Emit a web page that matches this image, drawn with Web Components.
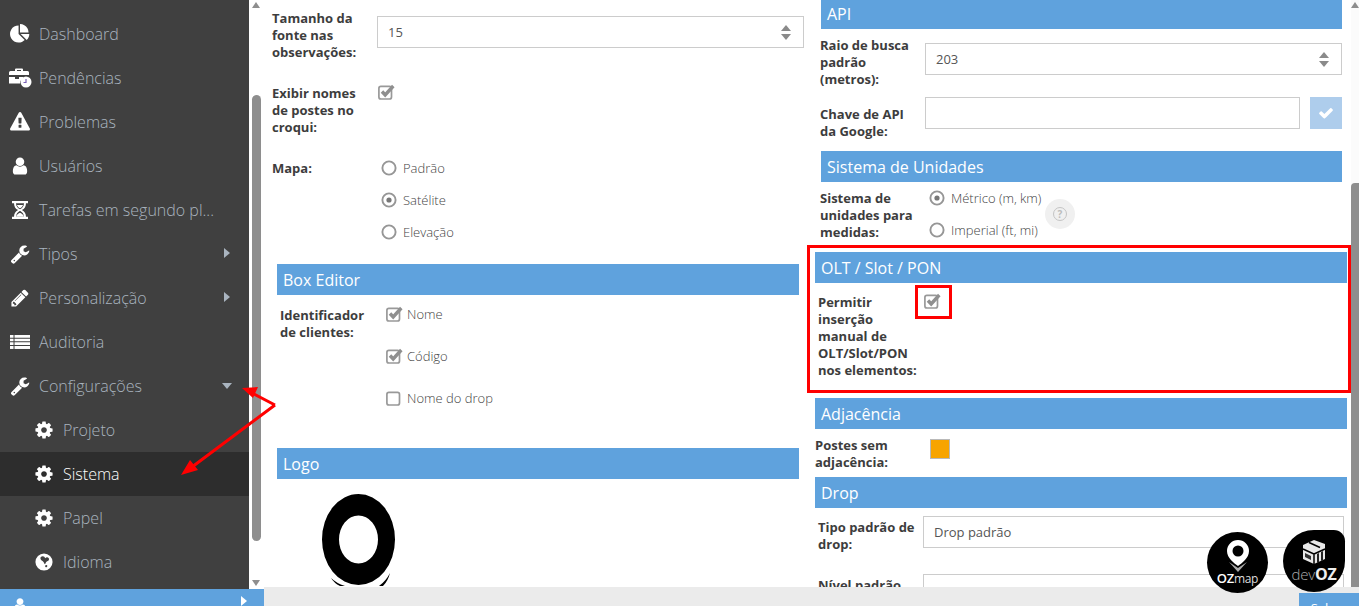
<!DOCTYPE html>
<html>
<head>
<meta charset="utf-8">
<title>Sistema</title>
<style>
  html,body{margin:0;padding:0;height:606px;overflow:hidden;background:#fff;font-family:"Open Sans",sans-serif;}
</style>
</head>
<body>
<app-shell>
  <side-nav slot="nav">
    <nav-item icon="pie">Dashboard</nav-item>
    <nav-item icon="case">Pendências</nav-item>
    <nav-item icon="warn">Problemas</nav-item>
    <nav-item icon="user">Usuários</nav-item>
    <nav-item icon="hour">Tarefas em segundo pl...</nav-item>
    <nav-item icon="wrench" caret="right">Tipos</nav-item>
    <nav-item icon="pencil" caret="right">Personalização</nav-item>
    <nav-item icon="list">Auditoria</nav-item>
    <nav-item icon="wrench" caret="down">Configurações</nav-item>
    <nav-item icon="cog" sub>Projeto</nav-item>
    <nav-item icon="cog" sub active>Sistema</nav-item>
    <nav-item icon="cog" sub>Papel</nav-item>
    <nav-item icon="globe" sub>Idioma</nav-item>
  </side-nav>

  <settings-col slot="left" style="padding:10px 0 0 8px">
    <form-row label="Tamanho da fonte nas observações:" width="105" height="75"><num-input value="15" w="427"></num-input></form-row>
    <form-row label="Exibir nomes de postes no croqui:" width="105" height="75"><check-opt checked nudge="1"></check-opt></form-row>
    <form-row label="Mapa:" width="105" height="104">
      <radio-opt nudge="4">Padrão</radio-opt>
      <radio-opt nudge="4" checked>Satélite</radio-opt>
      <radio-opt nudge="4">Elevação</radio-opt>
    </form-row>
    <sec-head style="margin:0 0 0 5px;width:522px">Box Editor</sec-head>
    <form-row label="Identificador de clientes:" width="106" height="141" style="margin:12px 0 0 8px">
      <check-opt checked gap="42">Nome</check-opt>
      <check-opt checked gap="42">Código</check-opt>
      <check-opt>Nome do drop</check-opt>
    </form-row>
    <sec-head style="margin:0 0 0 5px;width:522px">Logo</sec-head>
    <logo-mark></logo-mark>
  </settings-col>

  <settings-col slot="right">
    <sec-head style="margin:-1px 0 0 14px;width:521px;height:30px">API</sec-head>
    <form-row label="Raio de busca padrão (metros):" width="105" height="60" style="margin:8px 0 0 13px"><num-input value="203" w="417"></num-input></form-row>
    <form-row label="Chave de API da Google:" width="105" height="46" top="9" style="margin:0 0 0 13px">
      <key-input></key-input>
    </form-row>
    <sec-head style="margin:8px 0 0 14px;width:521px">Sistema de Unidades</sec-head>
    <form-row label="Sistema de unidades para medidas:" width="109" height="62" style="margin:8px 0 0 13px">
      <radio-opt h="32" checked>Métrico (m, km)</radio-opt>
      <radio-opt h="30">Imperial (ft, mi)</radio-opt>
      <help-dot></help-dot>
    </form-row>
    <sec-head style="margin:0 0 0 8px;width:532px">OLT / Slot / PON</sec-head>
    <form-row label="Permitir inserção manual de OLT/Slot/PON nos elementos:" width="106" height="104" style="margin:11px 0 0 11px"><check-opt checked></check-opt></form-row>
    <sec-head style="margin:0 0 0 8px;width:532px">Adjacência</sec-head>
    <form-row label="Postes sem adjacência:" width="115" height="40" style="margin:8px 0 0 8px"><color-swatch></color-swatch></form-row>
    <sec-head style="margin:0 0 0 8px;width:532px">Drop</sec-head>
    <form-row label="Tipo padrão de drop:" width="105" height="58" style="margin:11px 0 0 11px"><text-box w="421">Drop padrão</text-box></form-row>
    <form-row label="Nível padrão" width="105" height="30" style="margin:0 0 0 11px"><text-box w="421"></text-box></form-row>
  </settings-col>
</app-shell>
<page-marks></page-marks>

<template id="app-shell">
  <style>
    :host{display:grid;grid-template-columns:264px 1fr;width:1359px;height:606px;overflow:hidden;position:relative}
    .side{display:flex;flex-direction:column;height:606px}
    .side-top{display:flex;height:589px}
    .nav{width:249px;background:#404040;overflow:hidden}
    .foot{height:17px;background:#5fa2dd;color:#fff;display:flex;justify-content:space-between;padding:8px 17px 0 12px;box-sizing:border-box;overflow:hidden}
    .foot svg{display:block;flex:none}
    .main{display:flex;flex-direction:column;height:606px;overflow:hidden}
    .body{display:flex;height:587px;overflow:hidden}
    .cols{display:grid;grid-template-columns:543px 544px;width:1087px;overflow:hidden}
    .bar{height:19px;background:#ebebeb;display:flex;justify-content:flex-end;padding-top:6px;box-sizing:border-box}
    .save{width:60px;height:20px;background:#5fa2dd;color:#fff;font-size:13px;text-align:center;line-height:20px;padding-top:5px;box-sizing:border-box}
  </style>
  <div class="side">
    <div class="side-top">
      <div class="nav"><slot name="nav"></slot></div>
      <v-scroll top="95" h="446" track="589" w="15"></v-scroll>
    </div>
    <div class="foot">
      <svg width="16" height="16" viewBox="0 0 1792 1792" fill="#fff"><path d="M1536 1399q0 109-62.5 187t-150.5 78h-854q-88 0-150.5-78t-62.5-187q0-85 8.5-160.5t31.5-152 58.5-131 94-89 134.5-34.5q131 128 313 128t313-128q76 0 134.5 34.5t94 89 58.5 131 31.5 152 8.5 160.5zm-256-887q0 159-112.5 271.5t-271.5 112.5-271.5-112.5-112.5-271.5 112.5-271.5 271.5-112.5 271.5 112.5 112.5 271.5z"/></svg>
      <svg width="6" height="10" viewBox="0 0 6 10" fill="#fff" style="margin-top:-1px"><path d="M0 0l6 5-6 5z"/></svg>
    </div>
  </div>
  <div class="main">
    <div class="body">
      <div class="cols"><div><slot name="left"></slot></div><div><slot name="right"></slot></div></div>
      <v-scroll top="183" h="404" track="587" w="8"></v-scroll>
    </div>
    <div class="bar"><div class="save">Salvar</div></div>
  </div>
</template>

<script>
const ICONS = {
  pie: '<path d="M768 890l546 546q-106 108-247.5 168t-298.5 60q-209 0-385.5-103t-279.5-279.5-103-385.5 103-385.5 279.5-279.5 385.5-103v762zm187 6h773q0 157-60 298.5t-168 247.5zm709-128h-768v-768q209 0 385.5 103t279.5 279.5 103 385.5z"/>',
  warn: '<path d="M1024 1375v-190q0-14-9.5-23.5t-22.5-9.5h-192q-13 0-22.5 9.5t-9.5 23.5v190q0 14 9.5 23.5t22.5 9.5h192q13 0 22.5-9.5t9.5-23.5zm-2-374l18-459q0-12-10-19-13-11-24-11h-220q-11 0-24 11-10 7-10 21l17 457q0 10 10 16.5t24 6.5h185q14 0 23.5-6.5t10.5-16.5zm-14-934l768 1408q35 63-2 126-17 29-46.5 46t-63.5 17h-1536q-34 0-63.5-17t-46.5-46q-37-63-2-126l768-1408q17-31 47-49t65-18 65 18 47 49z"/>',
  user: '<path d="M1536 1399q0 109-62.5 187t-150.5 78h-854q-88 0-150.5-78t-62.5-187q0-85 8.5-160.5t31.5-152 58.5-131 94-89 134.5-34.5q131 128 313 128t313-128q76 0 134.5 34.5t94 89 58.5 131 31.5 152 8.5 160.5zm-256-887q0 159-112.5 271.5t-271.5 112.5-271.5-112.5-112.5-271.5 112.5-271.5 271.5-112.5 271.5 112.5 112.5 271.5z"/>',
  wrench: '<path d="M448 1472q0-26-19-45t-45-19-45 19-19 45 19 45 45 19 45-19 19-45zm644-420l-682 682q-37 37-90 37-52 0-91-37l-106-108q-38-36-38-90 0-53 38-91l681-681q39 98 114.5 173.5t173.5 114.5zm634-435q0 39-23 106-47 134-164.5 217.5t-258.5 83.5q-185 0-316.5-131.5t-131.5-316.5 131.5-316.5 316.5-131.5q58 0 121.5 16.5t107.5 46.5q16 11 16 28t-16 28l-293 169v224l193 107q5-3 79-48.5t135.5-81 70.5-35.5q15 0 23.5 10t8.5 25z"/>',
  pencil: '<path d="M491 1536l91-91-235-235-91 91v107h128v128h107zm523-928q0-22-22-22-10 0-17 7l-542 542q-7 7-7 17 0 22 22 22 10 0 17-7l542-542q7-7 7-17zm-54-192l416 416-832 832h-416v-416zm683 96q0 53-37 90l-166 166-416-416 166-165q36-38 90-38 53 0 91 38l235 234q37 39 37 91z"/>',
  cog: '<path d="M1152 896q0-106-75-181t-181-75-181 75-75 181 75 181 181 75 181-75 75-181zm512-109v222q0 12-8 23t-20 13l-185 28q-19 54-39 91 35 50 107 138 10 12 10 25t-9 23q-27 37-99 108t-94 71q-12 0-26-9l-138-108q-44 23-91 38-16 136-29 186-7 28-36 28h-222q-14 0-24.5-8.5t-11.5-21.5l-28-184q-49-16-90-37l-141 107q-10 9-25 9-14 0-25-11-126-114-165-168-7-10-7-23 0-12 8-23 15-21 51-66.5t54-70.5q-27-50-41-99l-183-27q-13-2-21-12.5t-8-23.5v-222q0-12 8-23t19-13l186-28q14-46 39-92-40-57-107-138-10-12-10-24 0-10 9-23 26-36 98.5-107.5t94.5-71.5q13 0 26 10l138 107q44-23 91-38 16-136 29-186 7-28 36-28h222q14 0 24.5 8.5t11.5 21.5l28 184q49 16 90 37l142-107q9-9 24-9 13 0 25 10 129 119 165 170 7 8 7 22 0 12-8 23-15 21-51 66.5t-54 70.5q26 50 41 98l183 28q13 2 21 12.5t8 23.5z"/>',
  list: '<rect x="0" y="270" width="1792" height="1250"/><path d="M0 570h1792M0 880h1792M0 1200h1792M360 270v1250" stroke="#404040" stroke-width="90" fill="none"/>',
  hour: '<path d="M180 90h1432v190H180zM180 1510h1432v190H180zM360 280h180c0 240 130 420 360 540 -10 50 -10 100 0 150 -230 120-360 300-360 540H360c0-300 130-500 360-615 -230-115-360-315-360-615zM1432 280h-180c0 240-130 420-360 540 10 50 10 100 0 150 230 120 360 300 360 540h180c0-300-130-500-360-615 230-115 360-315 360-615z"/><path d="M540 1510c30-170 170-290 356-370 186 80 326 200 356 370zM620 440h552c-50 130-140 230-276 310-136-80-226-180-276-310z"/>',
  globe: '<path fill-rule="evenodd" d="M896 128a768 768 0 1 1 0 1536 768 768 0 0 1 0-1536zM640 420c-70 60-80 170-30 250 60 90 170 130 240 230 50 70 60 160 130 190 60-60 70-160 140-220 70-60 190-80 220-180 30-110-60-210-170-210-70 0-110 40-170 70-30-90-130-190-230-170-50 10-90 10-130 40zM1150 1180c-70-30-150 20-150 90 0 70 90 110 150 70 60-40 60-130 0-160z"/>',
};
const CASE_ICON = '<svg width="24" height="20" viewBox="0 0 24 20"><path fill="#fff" d="M7 3V1.500Q7 .5 8 .5h6Q15 .5 15 1.500V3h4.500Q21 3 21 4.500V7H1V4.500Q1 3 2.500 3zM9 2v1h4V2zM1 9h6v2h4V9h4v1.500a6 6 0 0 0-3 5H1z"/><circle cx="18" cy="14" r="5.500" fill="#fff"/><path d="M18 11v3.500h-2.500" stroke="#7a5fb5" stroke-width="1.200" fill="none"/></svg>';

class AppShell extends HTMLElement {
  constructor() {
    super();
    var shadow = this.attachShadow({mode: 'open'});
    shadow.appendChild(document.getElementById('app-shell').content.cloneNode(true));
  }
}

class VScroll extends HTMLElement {
  constructor() {
    super();
    var shadow = this.attachShadow({mode: 'open'});
    var w = this.getAttribute('w'), top = this.getAttribute('top'), h = this.getAttribute('h');
    var track = this.getAttribute('track');
    var wide = w > 10;
    shadow.innerHTML = `<style>
      :host{display:block;width:${w}px;height:${track}px;background:${wide ? '#fff' : '#fbfbfb'};position:relative;flex:none}
      .thumb{position:absolute;left:${wide ? 3 : 0}px;width:${wide ? 9 : 8}px;top:${top}px;height:${h}px;background:#8e8e8e;border-radius:${wide ? '5px' : '4px 0 0 0'}}
      .up,.down{position:absolute;width:0;height:0;border-left:4px solid transparent;border-right:4px solid transparent;left:${wide ? 3 : 0}px}
      .up{top:2px;border-bottom:6px solid #8e8e8e}
      .down{bottom:3px;border-top:6px solid #8e8e8e}
    </style><div class="thumb"></div><div class="up"></div><div class="down"></div>`;
  }
}

class SideNav extends HTMLElement {
  constructor() {
    super();
    var shadow = this.attachShadow({mode: 'open'});
    shadow.innerHTML = `<style>:host{display:block;padding-top:12px}</style><slot></slot>`;
  }
}

class NavItem extends HTMLElement {
  constructor() {
    super();
    var shadow = this.attachShadow({mode: 'open'});
    var icon = this.getAttribute('icon');
    var sub = this.hasAttribute('sub');
    var active = this.hasAttribute('active');
    var caret = this.getAttribute('caret');
    var svg = icon == 'case' ? CASE_ICON :
      `<svg width="20" height="20" viewBox="0 0 1792 1792" fill="#fff">${ICONS[icon]}</svg>`;
    var mark = '';
    if (caret == 'right') mark = '<span class="caret r"></span>';
    if (caret == 'down') mark = '<span class="caret d"></span>';
    shadow.innerHTML = `<style>
      :host{display:flex;align-items:center;height:44px;box-sizing:border-box;padding-left:${sub ? 33 : 8}px;
        font:300 16px/22px "Open Sans",sans-serif;color:${active ? '#fff' : '#a9b4bf'};background:${active ? '#2d2d2d' : 'transparent'};position:relative}
      .ic{width:${sub ? 22 : 24}px;display:flex;justify-content:center;margin-right:${sub ? 8 : 7}px;flex:none}
      svg{display:block}
      .caret{position:absolute;width:0;height:0}
      .r{left:224px;top:16px;border-top:5px solid transparent;border-bottom:5px solid transparent;border-left:6px solid #a9b4bf}
      .d{left:222px;top:19px;border-left:5px solid transparent;border-right:5px solid transparent;border-top:6px solid #a9b4bf}
    </style><span class="ic">${svg}</span><span><slot></slot></span>${mark}`;
  }
}

class SettingsCol extends HTMLElement {
  constructor() {
    super();
    var shadow = this.attachShadow({mode: 'open'});
    shadow.innerHTML = `<style>:host{display:block}</style><slot></slot>`;
  }
}

class SecHead extends HTMLElement {
  constructor() {
    super();
    var shadow = this.attachShadow({mode: 'open'});
    shadow.innerHTML = `<style>
      :host{display:flex;align-items:center;height:31px;box-sizing:border-box;padding-left:6px;background:#5fa2dd;color:#fff;
        font:400 16px/20px "Open Sans",sans-serif}
    </style><slot></slot>`;
  }
}

class FormRow extends HTMLElement {
  constructor() {
    super();
    var shadow = this.attachShadow({mode: 'open'});
    var w = this.getAttribute('width'), h = this.getAttribute('height');
    var top = this.getAttribute('top') || 0;
    // label text wraps at 100px whatever the column is
    shadow.innerHTML = `<style>
      :host{display:flex;height:${h}px;position:relative}
      .l{width:${w}px;box-sizing:border-box;padding-right:${w - 100}px;flex:none;font:700 13px/17px "Open Sans",sans-serif;color:#3d3d3d;margin-top:${top}px}
      .c{flex:1;min-width:0;position:relative}
    </style><div class="l">${this.getAttribute('label')}</div><div class="c"><slot></slot></div>`;
  }
}

class NumInput extends HTMLElement {
  constructor() {
    super();
    var shadow = this.attachShadow({mode: 'open'});
    shadow.innerHTML = `<style>
      :host{display:flex;align-items:center;justify-content:space-between;width:${this.getAttribute('w')}px;height:32px;box-sizing:border-box;
        border:1px solid #ccc;padding:0 12px 0 10px;margin-top:6px;font:400 13px "Open Sans",sans-serif;color:#555;background:#fff}
      i{display:block;width:0;height:0;border-left:5px solid transparent;border-right:5px solid transparent}
      .u{border-bottom:6px solid #8a8a8a;margin-bottom:3px}
      .d{border-top:6px solid #8a8a8a}
    </style><span>${this.getAttribute('value')}</span><span><i class="u"></i><i class="d"></i></span>`;
  }
}

class KeyInput extends HTMLElement {
  constructor() {
    super();
    var shadow = this.attachShadow({mode: 'open'});
    shadow.innerHTML = `<style>
      :host{display:flex;gap:10px}
      .i{width:375px;height:32px;box-sizing:border-box;border:1px solid #ccc}
      .b{width:32px;height:32px;background:#aecdec;display:flex;align-items:center;justify-content:center}
    </style><div class="i"></div><div class="b"><svg width="16" height="16" viewBox="0 0 1792 1792" fill="#fff"><path d="M1671 566q0 40-28 68l-724 724-136 136q-28 28-68 28t-68-28l-136-136-362-362q-28-28-28-68t28-68l136-136q28-28 68-28t68 28l294 295 656-657q28-28 68-28t68 28l136 136q28 28 28 68z"/></svg></div>`;
  }
}

class TextBox extends HTMLElement {
  constructor() {
    super();
    var shadow = this.attachShadow({mode: 'open'});
    shadow.innerHTML = `<style>
      :host{display:flex;align-items:center;width:${this.getAttribute('w')}px;height:32px;box-sizing:border-box;border:1px solid #ccc;
        padding-left:10px;margin-top:-3px;font:400 13px "Open Sans",sans-serif;color:#555;background:#fff}
    </style><slot></slot>`;
  }
}

class CheckOpt extends HTMLElement {
  constructor() {
    super();
    var shadow = this.attachShadow({mode: 'open'});
    var on = this.hasAttribute('checked');
    var gap = this.getAttribute('gap') || 0;
    var nudge = this.getAttribute('nudge') || 0;
    shadow.innerHTML = `<style>
      :host{display:flex;align-items:flex-start;height:${gap || 20}px;margin-left:${nudge}px;font:300 13px/17px "Open Sans",sans-serif;color:#444}
      svg{flex:none;display:block;margin-right:5px;overflow:visible}
      span{margin-top:-1px}
    </style><svg width="16" height="15" viewBox="0 0 16 15">
      <rect x=".9" y="1.400" width="12.600" height="12.600" rx="2" fill="#fff" stroke="#999" stroke-width="1.700"/>
      ${on ? '<path d="M4 6.500l3.200 3.500L15.300 1" fill="none" stroke="#8f8f8f" stroke-width="3.400"/>' : ''}
    </svg><span><slot></slot></span>`;
  }
}

class RadioOpt extends HTMLElement {
  constructor() {
    super();
    var shadow = this.attachShadow({mode: 'open'});
    var on = this.hasAttribute('checked');
    var nudge = this.getAttribute('nudge') || 0;
    var h = this.getAttribute('h') || 32;
    shadow.innerHTML = `<style>
      :host{display:flex;align-items:flex-start;height:${h}px;margin-left:${nudge}px;font:300 13px/17px "Open Sans",sans-serif;color:#444}
      svg{flex:none;display:block;margin-right:6px}
    </style><svg width="16" height="16" viewBox="0 0 16 16">
      <circle cx="8" cy="8" r="6.600" fill="#fff" stroke="#969696" stroke-width="1.900"/>
      ${on ? '<circle cx="8" cy="8" r="2.600" fill="#777"/>' : ''}
    </svg><span><slot></slot></span>`;
  }
}

class HelpDot extends HTMLElement {
  constructor() {
    super();
    var shadow = this.attachShadow({mode: 'open'});
    shadow.innerHTML = `<style>
      :host{position:absolute;left:116px;top:9px;width:30px;height:30px;border-radius:50%;background:#f0f0f0;display:flex;align-items:center;justify-content:center}
      b{width:14px;height:14px;box-sizing:border-box;border:1px solid #c4c4c4;border-radius:50%;color:#bdbdbd;font:700 10px/12px "Open Sans",sans-serif;text-align:center}
    </style><b>?</b>`;
  }
}

class ColorSwatch extends HTMLElement {
  constructor() {
    super();
    var shadow = this.attachShadow({mode: 'open'});
    shadow.innerHTML = `<style>
      :host{display:block;width:20px;height:20px;box-sizing:border-box;background:#f7a400;border:1px solid #b9b9b9;margin-top:2px}
    </style>`;
  }
}

class LogoMark extends HTMLElement {
  constructor() {
    super();
    var shadow = this.attachShadow({mode: 'open'});
    shadow.innerHTML = `<style>
      :host{display:block;height:108px;overflow:hidden;padding:15px 0 0 49px}
      svg{display:block}
    </style><svg width="90" height="110" viewBox="0 0 90 110">
      <path d="M10 84q3 5 9 8h5q-9-3-14-8zM69 79q-4 8-11 13h4q5-5 7-13z" fill="#000"/>
      <path fill-rule="evenodd" fill="#000" d="M37.500 0a36.500 45.500 0 1 1 0 91 36.500 45.500 0 0 1 0-91zM37.500 21.500a19.500 24 0 1 0 0 48 19.500 24 0 0 0 0-48z"/>
    </svg>`;
  }
}

class PageMarks extends HTMLElement {
  constructor() {
    super();
    var shadow = this.attachShadow({mode: 'open'});
    shadow.innerHTML = `<style>
      :host{position:absolute;left:0;top:0;width:1359px;height:606px;pointer-events:none}
      .box{position:absolute;box-sizing:border-box;border:3px solid #f00}
      .a{left:807px;top:245px;width:544px;height:148px}
      .b{left:915px;top:285px;width:37px;height:34px}
      svg.arrow{position:absolute;left:0;top:0}
      .badge{position:absolute;width:61px;height:61px;background:#000;border-radius:50%;color:#fff;font-family:"Open Sans",sans-serif;text-align:center;box-sizing:border-box}
      .oz{left:1207px;top:532px}
      .dev{left:1283px;top:530px;width:62px;height:62px;border-radius:50% 18% 50% 50%}
      .badge span{position:absolute;left:0;right:0;line-height:14px;white-space:nowrap}
      .oz span{top:39px;font-size:13px;font-weight:600;letter-spacing:-.3px}
      .oz span em{font-style:normal;font-weight:400;font-size:12px;color:#ddd}
      .dev span{top:37px;font-size:15px;font-weight:300;color:#aaa;letter-spacing:-.2px}
      .dev span b{color:#eee;font-weight:700;font-size:16px}
      .badge svg{position:absolute}
    </style>
    <div class="box a"></div><div class="box b"></div>
    <svg class="arrow" width="1359" height="606" viewBox="0 0 1359 606">
      <path d="M275 405L254 394M275 405L192 467" stroke="#f00" stroke-width="3" fill="none"/>
      <path d="M242 388l16-1-5 11zM181 475l9-15 8 10z" fill="#f00"/>
    </svg>
    <div class="badge oz">
      <svg style="left:18px;top:7px" width="26" height="34" viewBox="0 0 26 34"><path d="M13 1a11 11 0 0 1 11 11C24 19 17 24 13 27 9 24 2 19 2 12A11 11 0 0 1 13 1z" fill="#fff"/><circle cx="13" cy="12" r="5.500" fill="#000"/><path d="M4 23l9 10 9-10-9 6z" fill="#aaa"/></svg>
      <span>OZ<em>map</em></span>
    </div>
    <div class="badge dev">
      <svg style="left:18px;top:9px" width="26" height="26" viewBox="0 0 26 26"><path d="M2 6l11-5 11 4v15l-11 5-11-5z" fill="#e8e8e8"/><path d="M2 10l11 5v10M13 15l11-5M8 3.500l11 5" stroke="#000" stroke-width="1.500" fill="none"/><path d="M4 14l6 3v4l-6-3z" fill="#333"/><path d="M16 15l2-1v9l-2 1zM20 13l2-1v9l-2 1z" fill="#222"/></svg>
      <span>dev<b>OZ</b></span>
    </div>`;
  }
}

customElements.define('app-shell', AppShell);
customElements.define('v-scroll', VScroll);
customElements.define('side-nav', SideNav);
customElements.define('nav-item', NavItem);
customElements.define('settings-col', SettingsCol);
customElements.define('sec-head', SecHead);
customElements.define('form-row', FormRow);
customElements.define('num-input', NumInput);
customElements.define('key-input', KeyInput);
customElements.define('text-box', TextBox);
customElements.define('check-opt', CheckOpt);
customElements.define('radio-opt', RadioOpt);
customElements.define('help-dot', HelpDot);
customElements.define('color-swatch', ColorSwatch);
customElements.define('logo-mark', LogoMark);
customElements.define('page-marks', PageMarks);
</script>
</body>
</html>
